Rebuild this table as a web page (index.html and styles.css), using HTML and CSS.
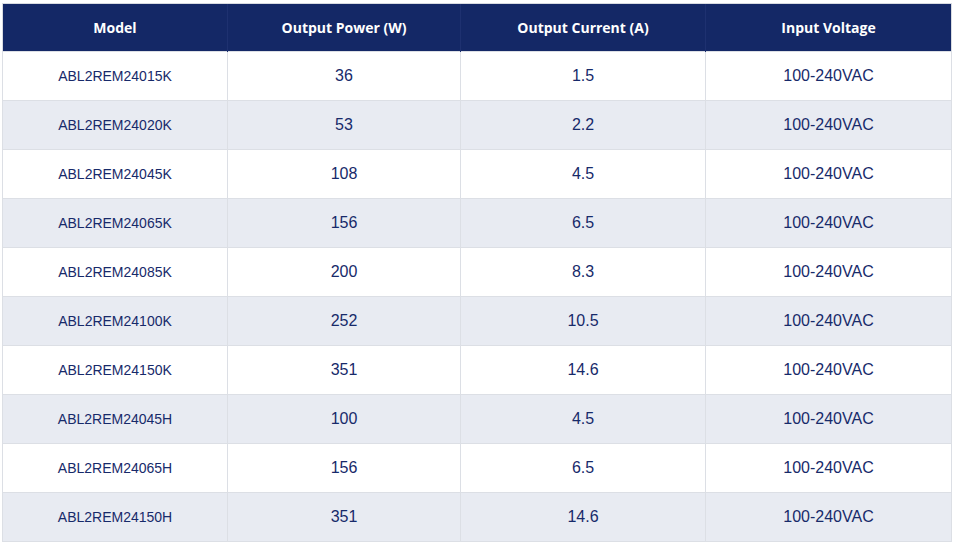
FILE: index.html
```html
<!DOCTYPE html>
<html>
<head>
<meta charset="utf-8">
<link rel="stylesheet" href="styles.css">
</head>
<body>
<table class="spec">
  <colgroup>
    <col class="c1"><col class="c2"><col class="c3"><col class="c4">
  </colgroup>
  <thead>
    <tr><th>Model</th><th>Output Power (W)</th><th>Output Current (A)</th><th>Input Voltage</th></tr>
  </thead>
  <tbody>
    <tr><td class="model">ABL2REM24015K</td><td>36</td><td>1.5</td><td>100-240VAC</td></tr>
    <tr><td class="model">ABL2REM24020K</td><td>53</td><td>2.2</td><td>100-240VAC</td></tr>
    <tr><td class="model">ABL2REM24045K</td><td>108</td><td>4.5</td><td>100-240VAC</td></tr>
    <tr><td class="model">ABL2REM24065K</td><td>156</td><td>6.5</td><td>100-240VAC</td></tr>
    <tr><td class="model">ABL2REM24085K</td><td>200</td><td>8.3</td><td>100-240VAC</td></tr>
    <tr><td class="model">ABL2REM24100K</td><td>252</td><td>10.5</td><td>100-240VAC</td></tr>
    <tr><td class="model">ABL2REM24150K</td><td>351</td><td>14.6</td><td>100-240VAC</td></tr>
    <tr><td class="model">ABL2REM24045H</td><td>100</td><td>4.5</td><td>100-240VAC</td></tr>
    <tr><td class="model">ABL2REM24065H</td><td>156</td><td>6.5</td><td>100-240VAC</td></tr>
    <tr><td class="model">ABL2REM24150H</td><td>351</td><td>14.6</td><td>100-240VAC</td></tr>
  </tbody>
</table>
</body>
</html>
```
FILE: styles.css
```css
html, body {
  margin: 0;
  background: #ffffff;
}
body {
  padding: 3px 0 0 2px;
  font-family: "Liberation Sans", Arial, sans-serif;
}
.spec {
  width: 950px;
  border-collapse: collapse;
  table-layout: fixed;
  border: 1px solid #d8dbe1;
}
.c1 { width: 225px; }
.c2 { width: 233px; }
.c3 { width: 245px; }
.c4 { width: 246px; }
.spec th {
  background: #142866;
  color: #ffffff;
  font-family: "Open Sans", Inter, sans-serif;
  font-weight: 700;
  font-size: 14px;
  height: 47px;
  padding: 0;
  text-align: center;
  border-left: 1px solid #1e3170;
  border-top: 1px solid #d8dbe1;
}
.spec th:first-child { border-left: none; }
.spec td {
  height: 48px;
  padding: 0;
  text-align: center;
  color: #172a6a;
  font-size: 16px;
  border: 1px solid #dcdfe5;
}
.spec td.model { font-size: 14px; }
.spec tbody tr:nth-child(even) td { background: #e8ebf2; }
```
